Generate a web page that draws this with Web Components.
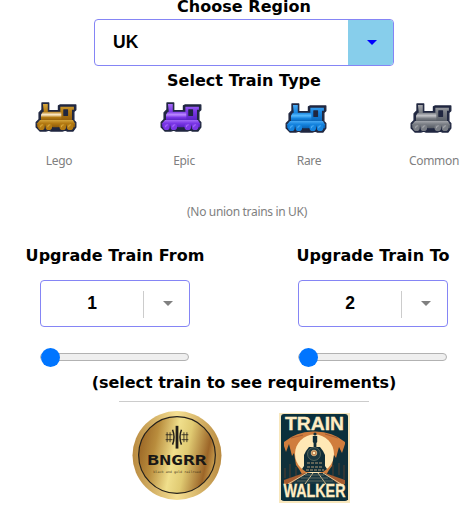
<!DOCTYPE html>
<html lang="en"><head><meta charset="utf-8"><title>Train upgrades</title>
<style>html,body{margin:0;background:#fff;overflow:hidden}body{width:474px;height:509px}</style></head>
<body><train-app></train-app>
<script>
const define=(name,html)=>customElements.define(name,class extends HTMLElement{
  connectedCallback(){
    if(this.shadowRoot)return;
    this.attachShadow({mode:'open'}).innerHTML=html;
  }
});

define('section-title',`<style>:host{display:block;height:20px;font:bold 16px/22px "DejaVu Sans",Verdana,sans-serif;letter-spacing:var(--track,.03px);text-align:center;white-space:nowrap;color:#000}</style><slot></slot>`);

define('pick-list',`<style>
:host{display:flex;box-sizing:border-box;width:150px;height:47px;border:1px solid #8585f5;border-radius:4px;overflow:hidden;background:#fff;font:bold 17.5px/45px "Liberation Sans",Arial,sans-serif;color:#000}
.value{flex:1;text-align:center;text-indent:-1px}
.arrow{width:45px;display:grid;place-items:center;position:relative}
.arrow::before{content:"";position:absolute;left:-1px;top:10px;height:27px;width:1px;background:#ccc}
svg{width:10px;height:5px;fill:#808080;margin-left:3px}
:host([wide]){width:300px}
:host([wide]) .value{text-align:left;padding-left:19px}
:host([wide]) .arrow{background:skyblue}
:host([wide]) .arrow::before{display:none}
:host([wide]) svg{fill:#00f}
</style><div class="value"><slot></slot></div><div class="arrow"><svg viewBox="0 0 10 5"><path d="M0 0h10L5 5z"/></svg></div>`);

define('level-slider',`<style>
:host{display:flex;align-items:center;width:149px;height:18px}
.track{box-sizing:border-box;width:100%;height:8px;border:1px solid #b2b2b2;border-radius:4px;background:#efefef;display:flex;align-items:center}
.thumb{flex:none;width:19px;height:19px;margin-left:-.5px;border-radius:50%;background:#0075ff}
</style><div class="track"><div class="thumb"></div></div>`);

define('train-option',`<style>
:host{display:grid;grid-template-rows:35px 20px;row-gap:16px;justify-items:center;width:125px;font:12px/20px "Noto Sans",sans-serif;color:#808080}
svg{width:42px;height:30px;margin-left:-6px;margin-top:var(--drop,2px)}
.label{letter-spacing:-.3px}
</style><svg viewBox="0 0 43 31">
<defs><linearGradient id="g" x2="0" y2="1"><stop offset="0" stop-color="var(--hi)"/><stop offset=".45" stop-color="var(--mid)"/><stop offset="1" stop-color="var(--lo)"/></linearGradient>
<linearGradient id="b" x2="0" y2="1"><stop offset="0" stop-color="var(--mid)"/><stop offset=".35" stop-color="var(--shine)"/><stop offset=".65" stop-color="var(--mid)"/><stop offset="1" stop-color="var(--lo)"/></linearGradient></defs>
<path d="M7 1h7v8h10V4l2-1h16v5l-2 2v9l2 2v5l-3 4h-6l-2-1-3 1H16l-2-1-3 1H5l-4-4v-5l3-3v-7l3-3z" fill="#202740" stroke="#202740" stroke-width="1.300" stroke-linejoin="round"/>
<path d="M8 2h5v9H9zM26 5h14v3h-2v12H26z" fill="url(#g)"/>
<path d="M8 10h19v9H6v-6z" fill="url(#b)"/>
<rect x="29" y="7.500" width="5" height="7" rx=".5" fill="#202740"/>
<path d="M5 18.500h34l2 3.500v4H2v-4z" fill="url(#g)"/>
<g fill="var(--mid)"><circle cx="6.500" cy="25.500" r="3.500"/><circle cx="14" cy="25.500" r="3.500"/><circle cx="28.500" cy="25.500" r="3.500"/><circle cx="36" cy="25.500" r="3.500"/></g>
<path d="M10.300 24.500v4M18 26v3M24.500 26v3M32.300 24.500v4" stroke="#202740" stroke-width=".6"/>
<g fill="none" stroke="var(--hi)" stroke-width="1.100"><path d="M5.500 26q0-2.500 2.500-2.500M13 26q0-2.500 2.500-2.500M27 26q0-2.500 2.500-2.500M34.500 26q0-2.500 2.500-2.500"/></g>
</svg><span class="label"><slot></slot></span>`);

define('gold-badge',`<style>:host{display:block;width:90px;height:91px}svg{display:block;width:90px;height:91px}</style>
<svg viewBox="0 0 91 92"><defs><linearGradient id="g" y1=".4" x2="1" y2=".6"><stop stop-color="#9b6626"/><stop offset=".2" stop-color="#b98d3d"/><stop offset=".45" stop-color="#f0df8c"/><stop offset=".62" stop-color="#e0ca72"/><stop offset=".88" stop-color="#9c6528"/><stop offset="1" stop-color="#cda350"/></linearGradient>
<linearGradient id="h" x2="1"><stop stop-color="#b98a40"/><stop offset=".5" stop-color="#f5e093"/><stop offset="1" stop-color="#b98a40"/></linearGradient></defs>
<circle cx="45.500" cy="46" r="45" fill="url(#h)"/><circle cx="45.500" cy="45.500" r="38.800" fill="url(#g)" stroke="#25211b" stroke-width="1.200"/>
<g fill="none" stroke="#211d18"><path d="M45.500 16v23" stroke-width="2.800"/><path d="M34 25h7M34 30h7M50 25h7M50 30h7M35.500 22.500v10M38.500 22.500v10M52.500 22.500v10M55.500 22.500v10" stroke-width=".8"/><path d="M41 20q3 7.500 0 15M50 20q-3 7.500 0 15" stroke-width="1.500"/></g>
<text x="45.500" y="55.800" text-anchor="middle" textLength="60" lengthAdjust="spacingAndGlyphs" font-family="DejaVu Sans Mono" font-weight="700" font-size="14.500" fill="#191715">BNGRR</text>
<text x="45.500" y="63.500" text-anchor="middle" textLength="48" lengthAdjust="spacingAndGlyphs" font-family="DejaVu Sans Mono" font-size="3.300" fill="#463419">black and gold railroad</text></svg>`);

define('walker-poster',`<style>:host{display:block;width:71px;height:90px}svg{display:block;overflow:visible}</style>
<svg width="71" height="90" viewBox="0 0 71 90"><rect width="71" height="90" fill="#f8e7bd"/><rect x="2" y="1" width="67" height="87" rx="3" fill="#0b303c"/>
<path d="M5 29Q18 18 35 18.500Q53 18 66 29v40H5z" fill="#d07d3d"/><path d="M12 25l12-3M46 21l13 4" fill="none" stroke="#a45d34"/><circle cx="35.500" cy="41" r="19.500" fill="#ffe8b5"/>
<path d="M3 72V39l2-6 2 6 3-8 3 12 2-3 2 12 3 4 4 7v9zM68 72V36l-2-5-3 9-3-6-3 11-2-3-2 11-3 4-4 7v9z" fill="#10303a"/>
<path d="M6 55v10M11 51v14M17 54v10M54 52v11M60 50v12M65 52v14" stroke="#65422e" stroke-width=".8"/>
<circle cx="36" cy="21" r="1.600" fill="#102d37"/><path d="M33.800 23h4.400v6l-.8 1v6h-2.800v-6l-.8-1z" fill="#102d37"/>
<path d="M27 38l3-4h11l3 4 2 4v11l2 3-4 3H27l-4-3 2-3V42z" fill="#102d37"/>
<circle cx="35" cy="41" r="6.500" fill="#1d3940" stroke="#8f9077" stroke-width=".5"/><circle cx="35" cy="40" r="2.800" fill="#b97744" stroke="#e2bd85" stroke-width=".8"/><circle cx="35" cy="40" r="1.300" fill="#fff0bd"/>
<path d="M28 50h15M28 54h15M27 57h18" stroke="#b29b78" stroke-width="1" stroke-dasharray="3 1"/>
<path d="M5 67l20-7h21l20 7v4H5z" fill="#a55c30"/><path d="M27 60h18l16 12H10z" fill="#173640"/>
<path d="M28 60L9 71M34 60l-8 11M39 60l8 11M44 60l18 11" stroke="#dfc595" stroke-width="1"/><path d="M26 62h19M22 65h27M18 68h36" stroke="#6c7467" stroke-width=".8"/>
<rect x="2" y="71" width="67" height="16" fill="#0b303c"/>
<g fill="#ffecc2" stroke="#ffecc2" stroke-width=".3" font-family="Liberation Sans" font-weight="700" text-anchor="middle"><text x="35.500" y="16.800" font-size="17.500" textLength="59" lengthAdjust="spacingAndGlyphs">TRAIN</text><text x="35.500" y="83.800" font-size="18" textLength="62" lengthAdjust="spacingAndGlyphs">WALKER</text></g></svg>`);

define('train-app',`<style>
:host{display:block;width:474px;height:509px;overflow:hidden}
.page{display:flex;flex-direction:column;align-items:center;width:488px}
section-title{flex:none}
.first{margin-top:-4px;margin-bottom:3px}
.types{display:grid;grid-template-columns:repeat(4,125px);margin-top:10px;margin-left:5px;width:500px}
.note{height:20px;margin:31px 0 23px 6px;font:12px/20px "Noto Sans",sans-serif;color:#808080;letter-spacing:-.33px}
.levels{display:grid;grid-template-columns:repeat(2,258px);width:516px;height:122px}
.level{display:flex;flex-direction:column;align-items:center}
.level pick-list{margin-top:15px}.level level-slider{margin:21px 1px 0 0}
.rule{width:250px;height:1px;background:#ccc;margin-top:9px}
.logos{display:flex;align-items:flex-start;gap:57px;margin-top:8px;margin-right:6px}
walker-poster{margin-top:3px}
.gold{--hi:#d6a63b;--mid:#b47b13;--lo:#8d5a0b;--shine:#ffeed0}
.purple{--hi:#a56bf8;--mid:#7b37e6;--lo:#5621bf;--shine:#bc8aff}
.blue{--hi:#48a9f3;--mid:#1684df;--lo:#0963b6;--shine:#57baff;--drop:3px}
.grey{--hi:#a5a7ac;--mid:#797d84;--lo:#565c65;--shine:#c4c5c9;--drop:3px}
</style><div class="page">
<section-title class="first">Choose Region</section-title>
<pick-list wide>UK</pick-list>
<section-title style="margin-top:4px">Select Train Type</section-title>
<div class="types"><train-option class="gold">Lego</train-option><train-option class="purple">Epic</train-option><train-option class="blue">Rare</train-option><train-option class="grey">Common</train-option></div>
<div class="note">(No union trains in UK)</div>
<div class="levels"><div class="level"><section-title>Upgrade Train From</section-title><pick-list>1</pick-list><level-slider></level-slider></div>
<div class="level"><section-title>Upgrade Train To</section-title><pick-list>2</pick-list><level-slider></level-slider></div></div>
<section-title style="margin-top:5px;--track:-.03px">(select train to see requirements)</section-title>
<div class="rule"></div>
<div class="logos"><gold-badge></gold-badge><walker-poster></walker-poster></div></div>`);
</script></body></html>
